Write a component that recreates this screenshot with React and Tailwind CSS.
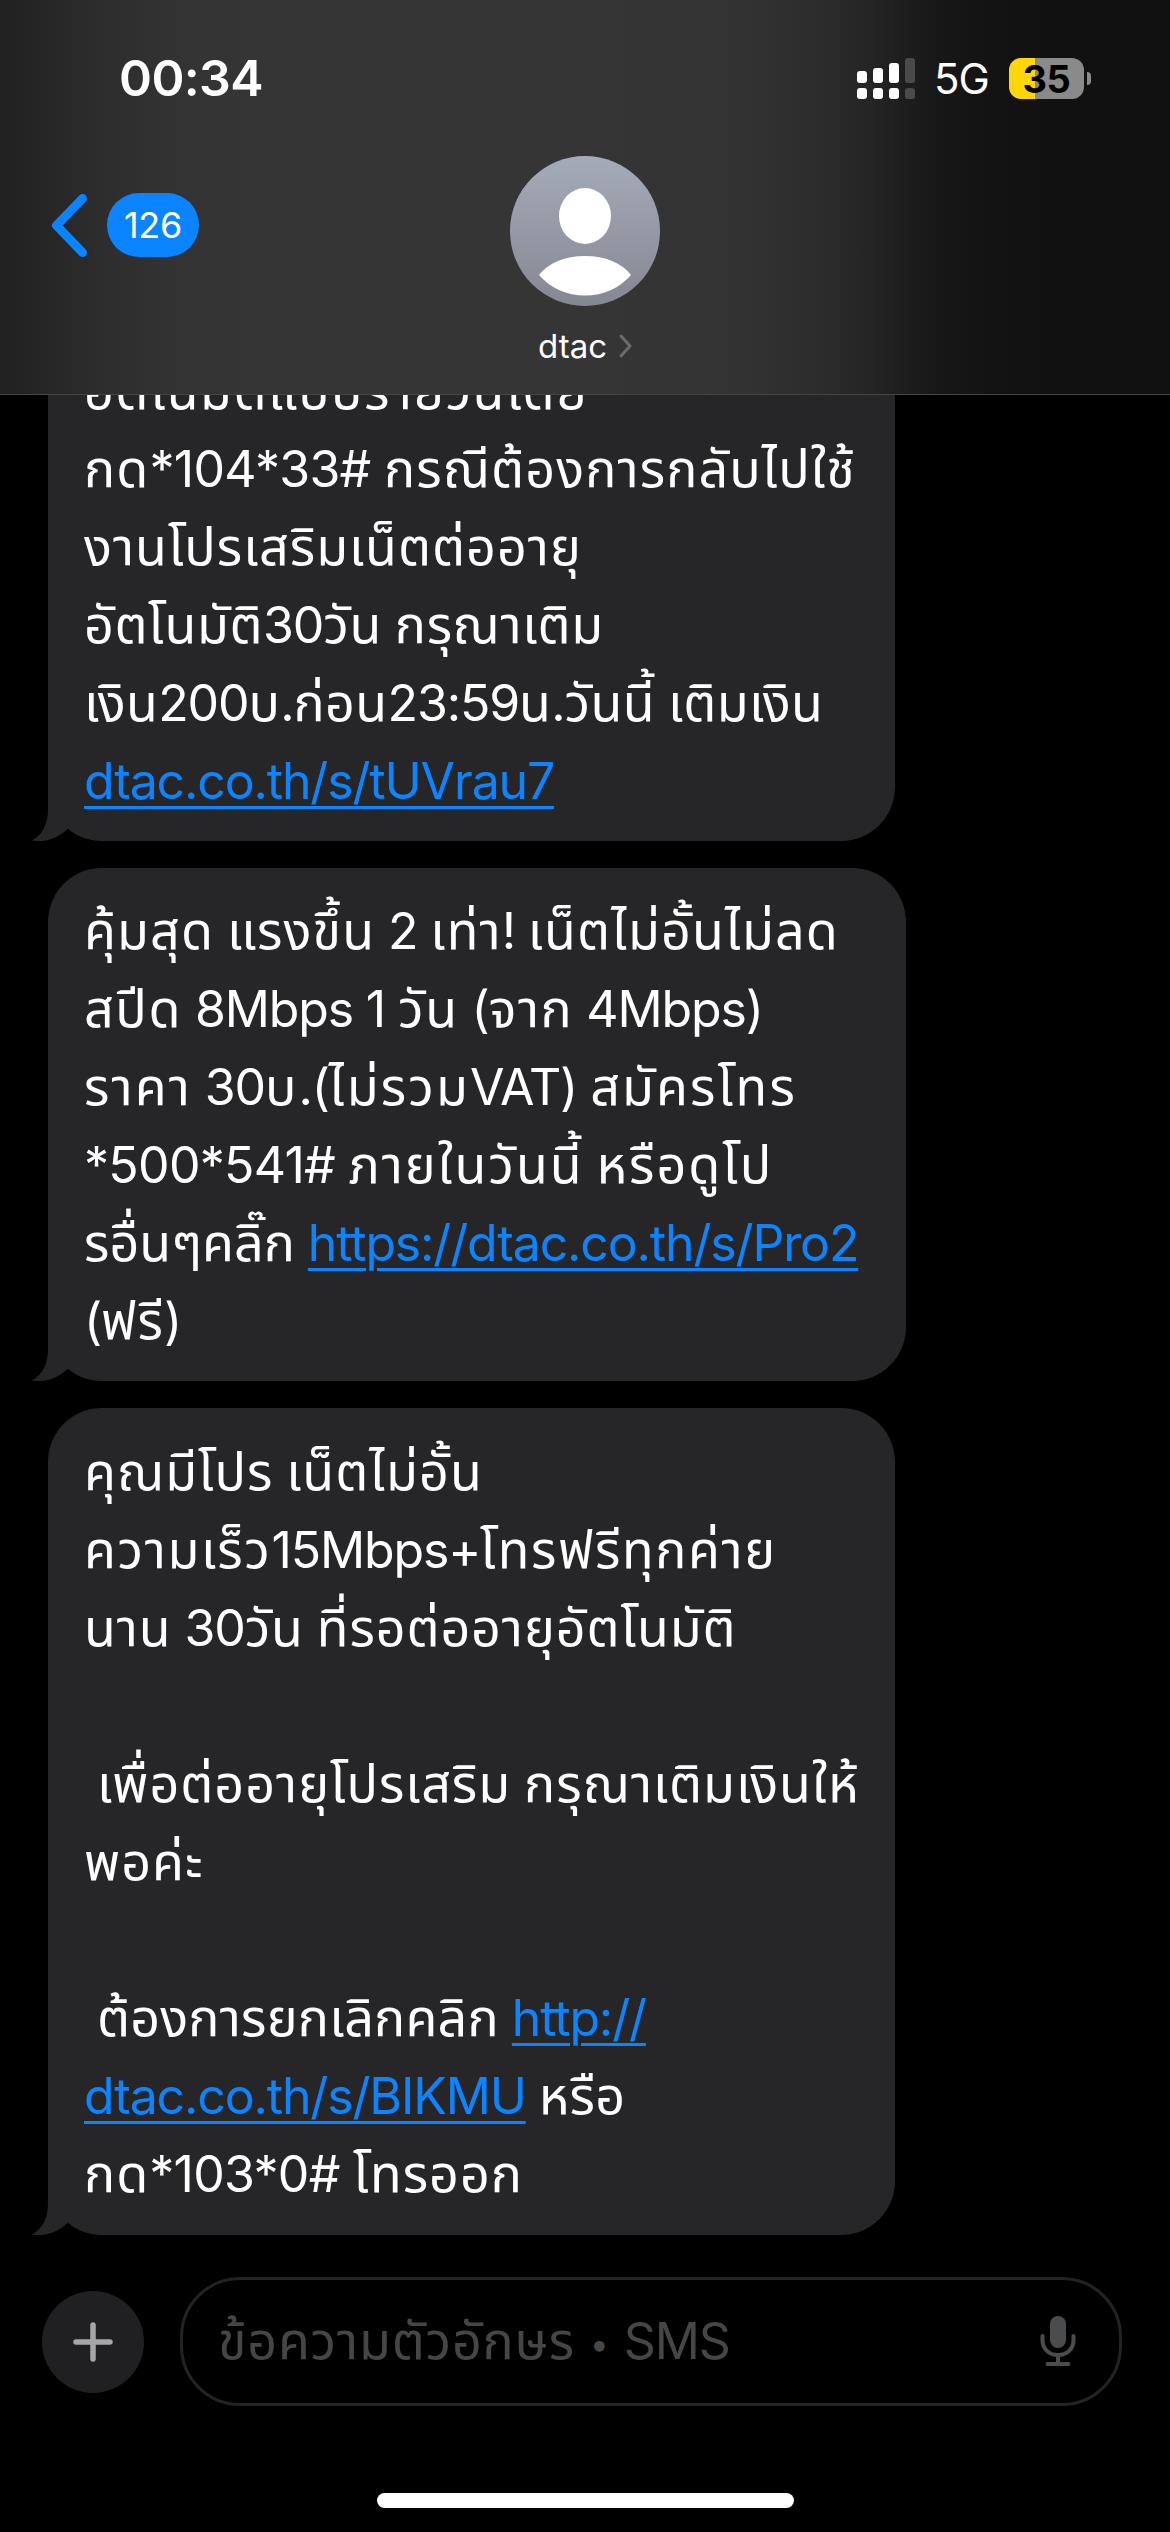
import React from 'react';

// `tracking` overrides the spacing of the Thai runs on that line.
const messages = [
  {
    id: 1,
    box: 'w-[847px] rounded-b-[54px] pb-[21px]',
    lines: [
      { tracking: 'tracking-[1.4px]', parts: [{ text: 'อัตโนมัติแบบรายวันโดย' }] },
      { tracking: 'tracking-[1.1px]', parts: [{ text: 'กด*104*33# กรณีต้องการกลับไปใช้' }] },
      { parts: [{ text: 'งานโปรเสริมเน็ตต่ออายุ' }] },
      { tracking: 'tracking-[0.6px]', parts: [{ text: 'อัตโนมัติ30วัน กรุณาเติม' }] },
      { tracking: 'tracking-[0.4px]', parts: [{ text: 'เงิน200บ.ก่อน23:59น.วันนี้ เติมเงิน' }] },
      { parts: [{ text: 'dtac.co.th/s/tUVrau7', link: true }] },
    ],
  },
  {
    id: 2,
    box: 'w-[858px] rounded-[54px] pt-[24px] pb-[21px]',
    lines: [
      { tracking: 'tracking-[1.1px]', parts: [{ text: 'คุ้มสุด แรงขึ้น 2 เท่า! เน็ตไม่อั้นไม่ลด' }] },
      { tracking: 'tracking-[1.6px]', parts: [{ text: 'สปีด 8Mbps 1 วัน (จาก 4Mbps)' }] },
      { tracking: 'tracking-[2.1px]', parts: [{ text: 'ราคา 30บ.(ไม่รวมVAT) สมัครโทร' }] },
      { tracking: 'tracking-[2px]', parts: [{ text: '*500*541# ภายในวันนี้ หรือดูโป' }] },
      {
        tracking: 'tracking-[0px]',
        parts: [{ text: 'รอื่นๆคลิ๊ก ' }, { text: 'https://dtac.co.th/s/Pro2', link: true }],
      },
      { parts: [{ text: '(ฟรี)' }] },
    ],
  },
  {
    id: 3,
    box: 'w-[847px] rounded-[54px] pt-[25px] pb-[22px]',
    lines: [
      { parts: [{ text: 'คุณมีโปร เน็ตไม่อั้น' }] },
      { tracking: 'tracking-[1.6px]', parts: [{ text: 'ความเร็ว15Mbps+โทรฟรีทุกค่าย' }] },
      { tracking: 'tracking-[0.9px]', parts: [{ text: 'นาน 30วัน ที่รอต่ออายุอัตโนมัติ' }] },
      { parts: [] },
      { parts: [{ text: ' เพื่อต่ออายุโปรเสริม กรุณาเติมเงินให้' }] },
      { parts: [{ text: 'พอค่ะ' }] },
      { parts: [] },
      {
        tracking: 'tracking-[0.2px]',
        parts: [{ text: ' ต้องการยกเลิกคลิก ' }, { text: 'http://', link: true }],
      },
      {
        tracking: 'tracking-[0.3px]',
        parts: [{ text: 'dtac.co.th/s/BIKMU', link: true }, { text: ' หรือ' }],
      },
      { parts: [{ text: 'กด*103*0# โทรออก' }] },
    ],
  },
];

const THAI = /[\u0E00-\u0E7F]/;

// Thai and Latin runs are tracked separately
function Runs({ text, tracking = 'tracking-[1px]' }) {
  const runs = text.match(/[\u0E00-\u0E7F]+|[^\u0E00-\u0E7F]+/g) || [];
  return runs.map((run, i) => {
    if (THAI.test(run)) {
      return <span key={i} className={`text-[52px] ${tracking}`}>{run}</span>;
    }
    if (run.includes('*')) {
      return <span key={i} className="tracking-[-0.7px] [font-feature-settings:'calt'_0]">{run}</span>;
    }
    return <span key={i} className="tracking-[-1.15px]">{run}</span>;
  });
}

function SignalIcon() {
  return (
    <svg className="h-[41px] w-[58px]" viewBox="0 0 58 41" fill="#fff">
      <rect x="0" y="13" width="10" height="12" rx="3" />
      <rect x="16" y="10" width="10" height="15" rx="3" />
      <rect x="32" y="5" width="10" height="20" rx="3" />
      <rect x="48" y="0" width="10" height="25" rx="3" fill="#4a4a4a" />
      <rect x="0" y="30" width="10" height="11" rx="3" />
      <rect x="16" y="30" width="10" height="11" rx="3" />
      <rect x="32" y="30" width="10" height="11" rx="3" />
      <rect x="48" y="30" width="10" height="11" rx="3" fill="#4a4a4a" />
    </svg>
  );
}

function Battery() {
  return (
    <div className="flex items-center gap-[3px]">
      <div className="flex h-[41px] w-[75px] items-center justify-center rounded-[12px] bg-[linear-gradient(90deg,#ffd60a_26px,#8a8a8a_26px)] text-[38px] font-bold leading-none tracking-[-0.5px] text-black">
        35
      </div>
      <div className="h-[13px] w-[4px] rounded-r-full bg-[#8a8a8a]" />
    </div>
  );
}

function StatusBar() {
  return (
    <div className="flex h-[156px] items-start justify-between pl-[119px] pr-[79px] pt-[57px] text-white">
      <span className="text-[50px] font-semibold leading-[42px] tracking-[-0.6px]">00:34</span>
      <div className="flex items-center">
        <SignalIcon />
        <span className="ml-[19px] w-[55px] whitespace-nowrap text-[42px] leading-[43px] tracking-[-1px]">5G</span>
        <div className="ml-[20px]">
          <Battery />
        </div>
      </div>
    </div>
  );
}

function Avatar() {
  return (
    <svg className="size-[150px]" viewBox="0 0 150 150">
      <defs>
        <linearGradient id="avatar" x1="0" y1="0" x2="0" y2="1">
          <stop offset="0" stopColor="#a5abb9" />
          <stop offset="1" stopColor="#858892" />
        </linearGradient>
      </defs>
      <circle cx="75" cy="75" r="75" fill="url(#avatar)" />
      <ellipse cx="75" cy="60" rx="26" ry="28" fill="#fff" />
      <path d="M29 119C38 107 55 100 75 100s37 7 46 19c-11 13-28 20.500-46 20.500S40 132 29 119z" fill="#fff" />
    </svg>
  );
}

function Header() {
  return (
    <header className="h-[395px] shrink-0 border-b border-[#454545] bg-[linear-gradient(90deg,#212121_0px,#252525_40px,#2d2d2d_100px,#333334_180px,#353536_260px,#353535_600px,#323233_750px,#2c2c2d_820px,#252525_868px,#1e1e1e_902px,#171717_940px,#131313_990px,#111111_1060px)]">
      <StatusBar />
      <div className="grid grid-cols-3">
        <div className="mt-[37px] flex h-[64px] items-center gap-[20px] self-start pl-[51px]">
          <svg className="h-[63px] w-[36px]" viewBox="0 0 36 63" fill="none" stroke="#0a84ff" strokeWidth="9" strokeLinecap="round" strokeLinejoin="round">
            <path d="M31.500 4.500L5.500 31.500L31.500 58.500" />
          </svg>
          <span className="flex h-[64px] w-[92px] items-center justify-center rounded-full bg-[#0a84ff] text-[36px] leading-none tracking-[-0.3px] text-white">
            126
          </span>
        </div>
        <div className="flex flex-col items-center">
          <Avatar />
          <div className="mt-[20px] flex items-center gap-[12px] text-[33px] leading-[40px] text-white">
            dtac
            <svg className="h-[24px] w-[13px]" viewBox="0 0 13 24" fill="none" stroke="#6b6b6d" strokeWidth="3" strokeLinecap="round" strokeLinejoin="round">
              <path d="M2 2L11 12L2 22" />
            </svg>
          </div>
        </div>
      </div>
    </header>
  );
}

function Tail() {
  return (
    <svg className="absolute bottom-0 left-[-16px] h-[60px] w-[52px]" viewBox="0 0 52 60" fill="#262628">
      <path d="M16 0V28C16 43 11 53 0 59.500C13 61.500 25 58 35.500 48L52 10V0z" />
    </svg>
  );
}

function Bubble({ message }) {
  return (
    <div className={`relative ml-[48px] shrink-0 bg-[#262628] pl-[36px] text-[50px] leading-[78px] text-white ${message.box}`}>
      {message.lines.map((line, i) => (
        <div key={i} className="h-[78px] whitespace-pre">
          {line.parts.map((part, j) => (
            <span
              key={j}
              className={part.link ? 'text-[#0a84ff] underline decoration-[3px] underline-offset-[7px]' : ''}
            >
              <Runs text={part.text} tracking={line.tracking} />
            </span>
          ))}
        </div>
      ))}
      <Tail />
    </div>
  );
}

function Composer() {
  return (
    <footer className="flex items-center gap-[36px] pl-[42px]">
      <button className="flex size-[102px] items-center justify-center rounded-full bg-[#202022]">
        <svg className="size-[40px]" viewBox="0 0 40 40" stroke="#a6a6a8" strokeWidth="5.500" strokeLinecap="round">
          <path d="M20 3V37M3 20H37" />
        </svg>
      </button>
      <div className="flex h-[129px] w-[942px] items-center justify-between rounded-[60px] border-[3px] border-[#232323] pl-[35px] pr-[43px]">
        <div className="flex items-baseline pt-[5px] text-[50px] leading-[78px] text-[#464648]">
          <Runs text="ข้อความตัวอักษร" tracking="tracking-[0.8px]" />
          <span className="w-[49px] -translate-y-[3px] text-center text-[34px]">•</span>
          <Runs text="SMS" />
        </div>
        <svg className="h-[51px] w-[36px]" viewBox="0 0 36 51" fill="none" stroke="#4b4c4e" strokeWidth="4" strokeLinecap="round">
          <rect x="10" y="0" width="16" height="32" rx="8" fill="#4b4c4e" stroke="none" />
          <path d="M2.500 20V24C2.500 33 9 39 18 39S33.500 33 33.500 24V20M18 39V48M7.500 48H28.500" />
        </svg>
      </div>
    </footer>
  );
}

export default function App() {
  return (
    <div className="flex h-[2532px] w-[1170px] flex-col overflow-hidden bg-black font-['Inter','Noto_Sans_Thai','Noto_Sans',sans-serif]">
      <Header />
      {/* scrolled list, the first bubble runs up under the header */}
      <main className="flex h-[1840px] shrink-0 flex-col justify-end gap-[27px] overflow-hidden">
        {messages.map((message) => (
          <Bubble key={message.id} message={message} />
        ))}
      </main>
      <div className="mt-[42px]">
        <Composer />
      </div>
      <div className="mx-auto mt-[87px] h-[15px] w-[417px] shrink-0 rounded-full bg-white" />
    </div>
  );
}
